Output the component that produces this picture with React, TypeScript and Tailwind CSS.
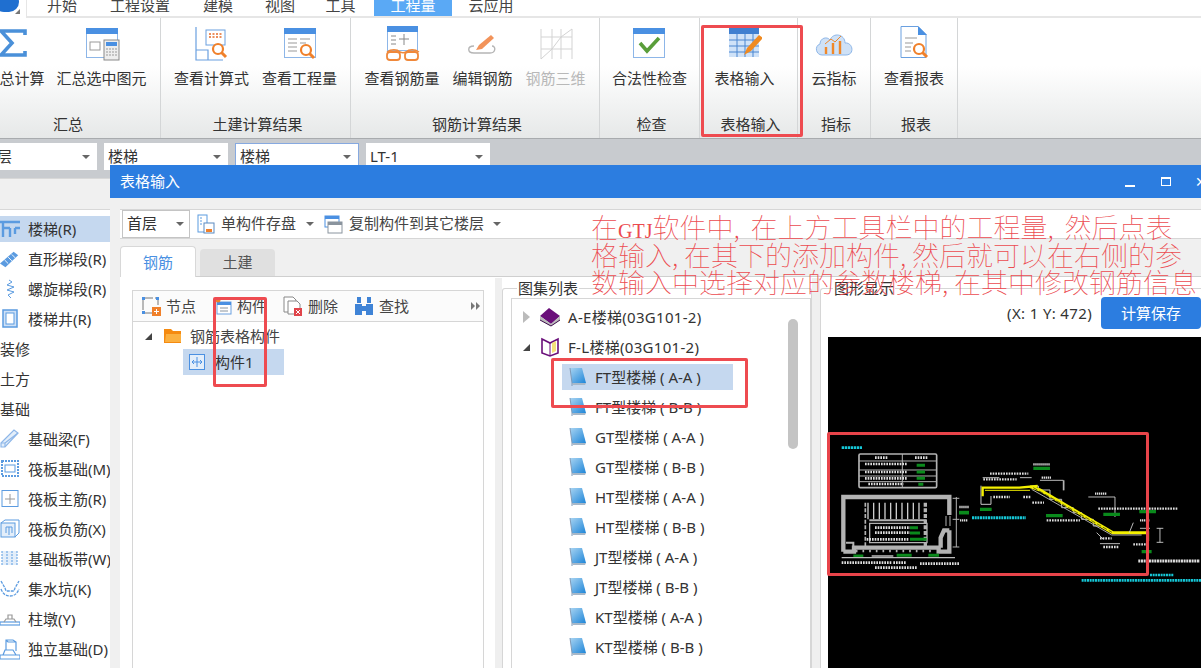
import type { ReactNode } from "react";

const tabs = [
  { label: "开始", w: "w-[70px]" },
  { label: "工程设置", w: "w-[86px]" },
  { label: "建模", w: "w-[70px]" },
  { label: "视图", w: "w-[54px]" },
  { label: "工具", w: "w-[67px]" },
  { label: "工程量", w: "w-[78px]", active: true },
  { label: "云应用", w: "w-[78px]" },
];

const sidebarRows: { label: string; icon?: string; selected?: boolean }[] = [
  { label: "楼梯(R)", icon: "stair", selected: true },
  { label: "直形梯段(R)", icon: "flight" },
  { label: "螺旋梯段(R)", icon: "spiral" },
  { label: "楼梯井(R)", icon: "well" },
  { label: "装修" },
  { label: "土方" },
  { label: "基础" },
  { label: "基础梁(F)", icon: "beam" },
  { label: "筏板基础(M)", icon: "raft" },
  { label: "筏板主筋(R)", icon: "main" },
  { label: "筏板负筋(X)", icon: "neg" },
  { label: "基础板带(W)", icon: "strip" },
  { label: "集水坑(K)", icon: "pit" },
  { label: "柱墩(Y)", icon: "pier" },
  { label: "独立基础(D)", icon: "footing" },
];

const stairList = [
  "FT型楼梯 ( A-A )",
  "FT型楼梯 ( B-B )",
  "GT型楼梯 ( A-A )",
  "GT型楼梯 ( B-B )",
  "HT型楼梯 ( A-A )",
  "HT型楼梯 ( B-B )",
  "JT型楼梯 ( A-A )",
  "JT型楼梯 ( B-B )",
  "KT型楼梯 ( A-A )",
  "KT型楼梯 ( B-B )",
];

function Win({ children }: { children?: ReactNode }) {
  return (
    <svg width="36" height="36" viewBox="0 0 36 36" fill="none">
      <rect x="2.5" y="3.5" width="31" height="29" fill="#fff" stroke="#8db6e8" />
      <rect x="2" y="3" width="32" height="6" fill="#4a90e2" />
      {children}
    </svg>
  );
}

function Magnifier({ x, y }: { x: number; y: number }) {
  return (
    <g stroke="#f0802a" strokeWidth="2.2" fill="#fff">
      <circle cx={x} cy={y} r="5" />
      <line x1={x + 3.5} y1={y + 3.5} x2={x + 8} y2={y + 8} strokeWidth="3" />
    </g>
  );
}

function RibbonIcon({ name }: { name: string }) {
  switch (name) {
    case "sigma":
      return (
        <svg width="36" height="36" viewBox="0 0 36 36" fill="none">
          <path d="M29 10V6H5l11 12L5 30h24v-4" stroke="#4a90d9" strokeWidth="3.6" />
        </svg>
      );
    case "sum":
      return (
        <Win>
          <rect x="6" y="17" width="10" height="8" stroke="#9a9a9a" />
          <rect x="20" y="15" width="15" height="20" fill="#eee" stroke="#8a8a8a" />
          <rect x="22" y="17" width="11" height="4" fill="#4a90e2" />
          <path d="M22 24h11M22 27h11M22 30h11" stroke="#999" strokeDasharray="2 1" />
        </Win>
      );
    case "formula":
      return (
        <svg width="36" height="36" viewBox="0 0 36 36" fill="none">
          <path d="M3 2v33h27M3 25h12v10" stroke="#6aa0e0" strokeWidth="1.2" />
          <rect x="13" y="5" width="19" height="15" fill="#fff" stroke="#6aa0e0" />
          <path d="M16 9h13M16 12h13" stroke="#e56a2a" strokeWidth="1.6" strokeDasharray="2 1.5" />
          <Magnifier x={25} y={24} />
        </svg>
      );
    case "quantity":
      return (
        <Win>
          <path d="M6 14h9M6 18h9M6 22h9M6 26h9M18 14h10M18 18h6" stroke="#999" />
          <Magnifier x={24} y={25} />
        </Win>
      );
    case "rebar":
      return (
        <svg width="36" height="36" viewBox="0 0 36 36" fill="none">
          <rect x="3.5" y="1.5" width="30" height="24" fill="#fff" stroke="#8db6e8" />
          <rect x="3" y="1" width="31" height="6" fill="#4a90e2" />
          <path d="M7 11h5M7 15h5M7 19h5M20 9v11M15 14h10" stroke="#888" />
          <path d="M3 27c4-3 10-3 13 0 2 1 4 1 6 0 3-3 9-3 13 0" stroke="#f0883a" strokeWidth="1.4" />
          <rect x="3" y="27" width="13" height="8" rx="3" fill="#fff" stroke="#f0883a" strokeWidth="1.8" />
          <rect x="21" y="27" width="13" height="8" rx="3" fill="#fff" stroke="#f0883a" strokeWidth="1.8" />
        </svg>
      );
    case "edit":
      return (
        <svg width="36" height="36" viewBox="0 0 36 36" fill="none">
          <path d="M10 21c-7 0-7 7 0 7h16c6 0 6-7 2-7" stroke="#b5b5b5" strokeWidth="1.4" />
          <path d="M12 25l3-5 12-10 3 3-12 11z" fill="#f2935a" />
        </svg>
      );
    case "grid3d":
      return (
        <svg width="36" height="36" viewBox="0 0 36 36" fill="none" stroke="#d3d3d3">
          <path d="M3 4v30M14 4v30M23 4v30M34 4v30M3 12h31M3 24h31M3 34l11-10 9-12 11-8" />
        </svg>
      );
    case "check":
      return (
        <Win>
          <path d="M9 18l7 8 12-13" stroke="#5a9e3a" strokeWidth="3.6" />
        </Win>
      );
    case "table":
      return (
        <svg width="36" height="36" viewBox="0 0 36 36" fill="none">
          <rect x="3" y="3" width="30" height="29" fill="#cfe2f8" />
          <rect x="3" y="3" width="30" height="6" fill="#3f7fd0" />
          <path d="M11 9v23M19 9v23M27 9v23M3 15h30M3 21h30M3 27h30" stroke="#4a86d0" />
          <path d="M18 30l3-7 12-13 4 3-12 13z" fill="#f08a20" />
        </svg>
      );
    case "cloud":
      return (
        <svg width="42" height="36" viewBox="0 0 42 36" fill="none">
          <path d="M9 30C3 30 1 21 7 19c0-6 7-8 10-4 3-8 15-6 15 3 8-1 10 12 1 12z" fill="#cfe1f6" stroke="#8db6e8" />
          <path d="M13 29v-7M20 29V18M27 29V16" stroke="#f0882a" strokeWidth="2.4" />
          <path d="M12 19l6-5 4 3 6-6" stroke="#f0882a" />
        </svg>
      );
    default:
      return (
        <svg width="36" height="36" viewBox="0 0 36 36" fill="none">
          <path d="M5 1.5h17l8 8v23H5z" fill="#fff" stroke="#6aa0e0" />
          <path d="M22 1l9 9h-9z" fill="#4a90e2" />
          <path d="M9 13h12M9 18h8M9 22h6M9 26h6" stroke="#999" />
          <Magnifier x={23} y={24} />
        </svg>
      );
  }
}

function RibbonItem({ icon, label, muted }: { icon: string; label: string; muted?: boolean }) {
  return (
    <div className="flex flex-col items-center whitespace-nowrap">
      <div className="flex h-[36px] items-center justify-center">
        <RibbonIcon name={icon} />
      </div>
      <span className={`mt-[7px] leading-[20px] ${muted ? "text-[#b8b8b8]" : "text-[#333]"}`}>{label}</span>
    </div>
  );
}

function RibbonGroup({ className, label, labelClass = "pl-[4px]", children }: { className: string; label: string; labelClass?: string; children: ReactNode }) {
  return (
    <div className={`flex h-full shrink-0 flex-col border-r border-[#d4d6d7] pt-[7px] pb-[4px] ${className}`}>
      <div className="flex flex-1 items-start justify-center">{children}</div>
      <div className={`text-center leading-[20px] text-[#333] ${labelClass}`}>{label}</div>
    </div>
  );
}

function Caret() {
  return <span className="block h-0 w-0 shrink-0 border-x-[4px] border-t-[4px] border-x-transparent border-t-[#666]" />;
}

function Combo({ w, label, focus }: { w: string; label: string; focus?: boolean }) {
  return (
    <div className={`flex h-[27px] items-center justify-between bg-white pl-[4px] pr-[7px] ${w} ${focus ? "border border-[#86a9e0]" : ""}`}>
      <span className="text-[#333]">{label}</span>
      <Caret />
    </div>
  );
}

function SideIcon({ name }: { name: string }) {
  const s = "#5b9be0";
  switch (name) {
    case "stair":
      return (
        <svg width="20" height="20" viewBox="0 0 20 20" fill="none" stroke={s} strokeWidth="2.4">
          <path d="M0 3h20M3 3v15M3 9h7M10 9v9M15 9h5M15 9v6" />
        </svg>
      );
    case "flight":
      return (
        <svg width="22" height="20" viewBox="0 0 22 20" fill="none">
          <path d="M0 15L15 2l5 4L6 19z" fill={s} />
          <path d="M5 11l4 4M9 8l4 4M13 5l4 4" stroke="#fff" />
        </svg>
      );
    case "spiral":
      return (
        <svg width="20" height="20" viewBox="0 0 20 20" fill="none" stroke={s}>
          <path d="M9 1l3 2-5 3 7 2-7 3 7 2-6 3 3 3" />
        </svg>
      );
    case "well":
      return (
        <svg width="20" height="20" viewBox="0 0 20 20" fill="none" stroke={s}>
          <rect x="3" y="1" width="14" height="17" fill="#cfe1f6" strokeWidth="1.5" />
          <rect x="6" y="4" width="8" height="11" fill="#fff" />
        </svg>
      );
    case "beam":
      return (
        <svg width="20" height="20" viewBox="0 0 20 20" fill="none" stroke="#8db6e8" strokeWidth="1.2">
          <path d="M1 14L14 1l4 3L5 18H1z" fill="#e3eefa" />
          <path d="M1 14h4v4M5 14L18 4" />
        </svg>
      );
    case "raft":
      return (
        <svg width="20" height="20" viewBox="0 0 20 20" fill="none" stroke={s}>
          <rect x="2" y="2" width="16" height="15" strokeWidth="2" strokeDasharray="2 1" />
          <rect x="5" y="6" width="10" height="7" />
        </svg>
      );
    case "main":
      return (
        <svg width="20" height="20" viewBox="0 0 20 20" fill="none" stroke={s}>
          <rect x="2" y="1.5" width="16" height="16" />
          <path d="M10 5v10M5 10h10" stroke="#999" />
        </svg>
      );
    case "neg":
      return (
        <svg width="20" height="20" viewBox="0 0 20 20" fill="none" stroke={s}>
          <rect x="1" y="4" width="14" height="14" fill="#e3eefa" />
          <path d="M1 4l4-3h14v13l-4 4M6 14V8h6v6M9 8v8" />
        </svg>
      );
    case "strip":
      return (
        <svg width="20" height="20" viewBox="0 0 20 20" fill="none" stroke={s}>
          <rect x="2" y="2" width="15" height="14" fill="#e3eefa" stroke="none" />
          <path d="M7 2v14M12 2v14M2 2v14M17 2v14" strokeDasharray="2 1" />
        </svg>
      );
    case "pit":
      return (
        <svg width="20" height="20" viewBox="0 0 20 20" fill="none" stroke={s} strokeWidth="1.3">
          <path d="M1 2l4 7 1 3h8l1-3 4-7M1 10c2 5 5 7 9 7s7-2 9-7" strokeDasharray="3 1" />
        </svg>
      );
    case "pier":
      return (
        <svg width="20" height="20" viewBox="0 0 20 20" fill="none" stroke={s} strokeWidth="1.2">
          <rect x="0" y="13" width="20" height="3" />
          <path d="M4 13l2-3h8l2 3M8 10V6h4v4" stroke="#999" />
        </svg>
      );
    default:
      return (
        <svg width="20" height="22" viewBox="0 0 20 22" fill="none" stroke={s} strokeWidth="1.2">
          <path d="M0 17h20v4H0zM3 17l2-5h8l3 5M6 12V2h7l3 2v9M6 2l2 2h8" />
        </svg>
      );
  }
}

function SidebarRow({ label, icon, selected }: { label: string; icon?: string; selected?: boolean }) {
  return (
    <div className="flex h-[30px] items-center">
      <div className={`flex h-[26px] w-full items-center overflow-hidden whitespace-nowrap ${selected ? "bg-[#c5d8ef]" : ""}`}>
        {icon ? (
          <>
            <span className="flex w-[20px] shrink-0 items-center justify-center">
              <SideIcon name={icon} />
            </span>
            <span className="ml-[8px]">{label}</span>
          </>
        ) : (
          <span>{label}</span>
        )}
      </div>
    </div>
  );
}

function PanelTool({ className, label, children }: { className: string; label: string; children: ReactNode }) {
  return (
    <div className={`flex items-center ${className}`}>
      {children}
      <span className="ml-[5px] text-[#444]">{label}</span>
    </div>
  );
}

function BlueBook({ id }: { id: string }) {
  return (
    <svg width="18" height="20" viewBox="0 0 18 20" fill="none">
      <defs>
        <linearGradient id={id} x1="0" y1="0" x2="1" y2="1">
          <stop offset="0" stopColor="#a8d4f2" />
          <stop offset="1" stopColor="#1f86d8" />
        </linearGradient>
      </defs>
      <path d="M1 1h12l4 15H3z" fill={`url(#${id})`} />
      <path d="M3 16h14l-1 2H4z" fill="#a8b8c8" />
      <path d="M1 1l2 15v3" stroke="#7f9ab8" />
    </svg>
  );
}

function Comma({ wide }: { wide?: boolean }) {
  return <span className={`inline-block ${wide ? "w-[17px]" : "w-[12px]"}`}>,</span>;
}

function CadDrawing() {
  const g = "#b3b3b3";
  return (
    <svg width="373" height="332" viewBox="0 0 373 332" className="block" fill="none">
      <g transform="translate(-8 84) scale(0.3333)">
        <path d="M65 80h62" stroke="#16c8d8" strokeWidth="8" strokeDasharray="7 2" />
        {/* rebar table */}
        <rect x="117" y="99" width="233" height="101" rx="4" stroke={g} strokeWidth="5" />
        <path d="M117 120h233M117 147h233M117 165h233M117 182h233M247 99v101" stroke={g} strokeWidth="3" />
        <path d="M135 129h125M135 153h125M135 172h125M145 189h105M165 110h40M285 110h40" stroke="#ddd" strokeWidth="8" strokeDasharray="5 3" />
        <path d="M290 133h25M290 153h25M290 172h25M295 190h15" stroke="#0a8a1c" strokeWidth="9" />
        {/* plan */}
        <path d="M70 392V228H388V282M388 328V392H356V380H102V392H70M388 328H372L362 350V380" stroke={g} strokeWidth="13" />
        <path d="M78 365h22v15" stroke={g} strokeWidth="6" />
        <path d="M144 245v50M161 245v50M178 245v50M195 245v50M212 245v50M229 245v50M246 245v50M263 245v50M280 245v50M297 245v50" stroke="#ccc" strokeWidth="4" />
        <path d="M136 245v130" stroke={g} strokeWidth="5" strokeDasharray="12 5" />
        <path d="M316 245v135" stroke={g} strokeWidth="10" strokeDasharray="12 5" />
        <path d="M148 298h172" stroke={g} strokeWidth="6" />
        <path d="M149 307h172v58H149z" stroke={g} strokeWidth="4" />
        <path d="M110 386v8M130 386v8M150 386v8M170 386v8M190 386v8M210 386v8M230 386v8M250 386v8M270 386v8M290 386v8M310 386v8M330 386v8" stroke={g} strokeWidth="5" />
        <path d="M165 320h105M165 335h105M140 355h125" stroke="#ddd" strokeWidth="8" strokeDasharray="5 3" />
        <path d="M270 320h24M270 336h30M270 355h50" stroke="#0a8a1c" strokeWidth="9" />
        <path d="M409 228v150M398 232h20M398 295h20M398 378h20M378 285v30M390 285v30" stroke={g} strokeWidth="3" />
        <path d="M417 275h30" stroke="#0a8a1c" strokeWidth="11" />
        <path d="M418 258h28M420 298h24" stroke="#ddd" strokeWidth="7" strokeDasharray="4 2" />
        <path d="M100 405h30M230 403h45M325 403h32" stroke="#0a8a1c" strokeWidth="9" />
        <path d="M155 405h65M65 410h340" stroke="#bbb" strokeWidth="4" />
        <path d="M65 425h150M165 440h125M300 428h120M220 425h40" stroke="#ddd" strokeWidth="8" strokeDasharray="5 3" />
        {/* section of the stair */}
        <path d="M483 194v56h30v-25M635 195h20v12h35v28h35v25h35v15h25v20h35v20h25" stroke="#c8c8c8" strokeWidth="3" />
        <path d="M488 170h50M600 170h35M660 178h70v30M732 178v30M805 228h80v60" stroke="#ddd" strokeWidth="2.5" />
        <path d="M510 158h115M490 175h100M520 228h50M610 228h22M637 245h35M680 298h100M835 263h240M840 352h35M850 378h45M940 370h45" stroke="#ddd" strokeWidth="7" strokeDasharray="5 3" />
        <path d="M640 130h50M665 170h30M825 218h35M960 298h30" stroke="#ddd" strokeWidth="7" strokeDasharray="4 2" />
        <path d="M640 142h50M480 265h35M678 284h50M850 280h50M958 272h50M965 392h30" stroke="#0a8a1c" strokeWidth="10" />
        <path d="M456 290h162" stroke="#16c8d8" strokeWidth="9" strokeDasharray="6 2" />
        <path d="M488 226V200h110l55-5" stroke="#f4f000" strokeWidth="7" />
        <path d="M495 208h135" stroke="#f4f000" strokeWidth="3" />
        <path d="M630 197l30 10 218 128h105v25" stroke="#f4f000" strokeWidth="9" />
        <path d="M635 205l240 137h90" stroke="#aaa" strokeWidth="3" />
        <path d="M640 200l236 134" stroke="#222" strokeWidth="2" strokeDasharray="14 6" />
        <path d="M940 305l-12 30M960 322h30M1020 322v42M1010 322h20M1010 364h20M830 335l20 20M840 368h60" stroke="#ddd" strokeWidth="2.5" />
        <path d="M955 420h185" stroke="#ddd" strokeWidth="9" strokeDasharray="6 2" />
        <path d="M990 462h70M785 478h360" stroke="#16c8d8" strokeWidth="8" strokeDasharray="6 2" />
        <path d="M760 462h100" stroke="#16a8c8" strokeWidth="4" strokeDasharray="6 2" />
      </g>
    </svg>
  );
}

export default function App() {
  return (
    <div className="relative h-[668px] w-[1201px] overflow-hidden bg-white font-['Noto_Sans','Noto_Sans_CJK_SC',sans-serif] text-[15px] text-[#333]">
      {/* tab strip, cut at the top of the shot */}
      <div className="flex h-[18px] overflow-hidden bg-white">
        <div className="relative w-[26px] shrink-0">
          <div className="absolute -top-[8px] left-[-6px] h-[20px] w-[25px] rounded-full bg-[#1f6fd0]" />
          <div className="absolute left-[15px] top-[9px] h-0 w-0 border-b-[5px] border-l-[5px] border-b-[#777] border-l-transparent" />
        </div>
        <div className="flex h-[18px] flex-1 border-b-2 border-l border-[#e6e6e6]">
          {tabs.map((t) => (
            <div
              key={t.label}
              className={`flex h-[16px] shrink-0 items-center justify-center leading-[10px] ${t.w} ${t.active ? "bg-[#5aa9f5] text-white" : "text-[#444]"}`}
            >
              <span className="-mt-[6px]">{t.label}</span>
            </div>
          ))}
        </div>
      </div>

      {/* ribbon */}
      <div className="flex h-[120px] bg-gradient-to-b from-white from-40% to-[#e6e8e8]">
        <RibbonGroup className="w-[161px]" label="汇总" labelClass="pr-[24px]">
          <div className="-ml-[29px] flex gap-[12px]">
            <RibbonItem icon="sigma" label="汇总计算" />
            <RibbonItem icon="sum" label="汇总选中图元" />
          </div>
        </RibbonGroup>
        <RibbonGroup className="w-[190px]" label="土建计算结果">
          <div className="flex gap-[13px]">
            <RibbonItem icon="formula" label="查看计算式" />
            <RibbonItem icon="quantity" label="查看工程量" />
          </div>
        </RibbonGroup>
        <RibbonGroup className="w-[249px]" label="钢筋计算结果">
          <div className="flex gap-[13px]">
            <RibbonItem icon="rebar" label="查看钢筋量" />
            <RibbonItem icon="edit" label="编辑钢筋" />
            <RibbonItem icon="grid3d" label="钢筋三维" muted />
          </div>
        </RibbonGroup>
        <RibbonGroup className="w-[100px]" label="检查">
          <RibbonItem icon="check" label="合法性检查" />
        </RibbonGroup>
        <RibbonGroup className="w-[98px]" label="表格输入">
          <div className="pr-[8px]">
            <RibbonItem icon="table" label="表格输入" />
          </div>
        </RibbonGroup>
        <RibbonGroup className="w-[73px]" label="指标">
          <RibbonItem icon="cloud" label="云指标" />
        </RibbonGroup>
        <RibbonGroup className="w-[87px]" label="报表">
          <RibbonItem icon="report" label="查看报表" />
        </RibbonGroup>
        <div className="flex-1" />
      </div>

      {/* selector row */}
      <div className="flex h-[40px] items-start gap-[7px] border-t border-[#a8abae] bg-[#c8cbcf] pt-[4px]">
        <div className="-ml-[7px]">
          <Combo w="w-[104px]" label="层" />
        </div>
        <Combo w="w-[124px]" label="楼梯" />
        <Combo w="w-[124px]" label="楼梯" focus />
        <Combo w="w-[124px]" label="LT-1" />
      </div>

      {/* component sidebar */}
      <div className="h-[490px] w-[111px] border-r border-[#b9bcc0]">
        <div className="h-[32px] border-y border-[#d8d8d8] bg-[#f0f0f0]" />
        <div className="pt-[4px]">
          {sidebarRows.map((r) => (
            <SidebarRow key={r.label} {...r} />
          ))}
        </div>
      </div>

      {/* dialog window */}
      <div className="absolute bottom-0 left-[110px] right-0 top-[165px] flex flex-col overflow-hidden bg-[#f0f0f0]">
        <div className="flex h-[33px] shrink-0 items-center bg-[#2c7de0] pl-[10px] text-white">
          <span>表格输入</span>
          <span className="ml-auto flex items-center">
            <span className="mt-[8px] h-[2px] w-[10px] bg-white" />
            <span className="ml-[26px] h-[9px] w-[10px] border border-t-2 border-white" />
            <span className="ml-[24px] w-[6px] overflow-hidden text-[14px] leading-none">✕</span>
          </span>
        </div>

        <div className="ml-[10px] mt-[11px] flex h-[30px] shrink-0 items-center border-y border-[#d6d6d6] bg-white pb-[1px]">
          <div className="ml-[2px] flex h-[28px] w-[68px] items-center justify-between border border-[#c4c4c4] pl-[4px] pr-[5px]">
            <span>首层</span>
            <Caret />
          </div>
          <svg className="ml-[7px]" width="18" height="20" viewBox="0 0 18 20" fill="none">
            <rect x="1" y="1" width="9" height="17" fill="#fff" stroke="#5b9be0" />
            <path d="M3 4h2M3 7h2M3 10h2" stroke="#5b9be0" />
            <rect x="7" y="9" width="10" height="10" fill="#fff" stroke="#5b8ac0" />
            <rect x="9" y="15" width="6" height="3" fill="#f0802a" />
          </svg>
          <span className="ml-[6px] text-[#444]">单构件存盘</span>
          <span className="ml-[10px]"><Caret /></span>
          <svg className="ml-[10px]" width="19" height="20" viewBox="0 0 19 20" fill="none">
            <rect x="1" y="2" width="14" height="11" fill="#fff" stroke="#4a90e2" />
            <rect x="1" y="2" width="14" height="3" fill="#4a90e2" />
            <rect x="4" y="8" width="14" height="11" fill="#fff" stroke="#8a949e" />
            <rect x="4" y="8" width="14" height="3" fill="#8a949e" />
          </svg>
          <span className="ml-[6px] text-[#444]">复制构件到其它楼层</span>
          <span className="ml-[9px]"><Caret /></span>
        </div>

        <div className="ml-[10px] mt-[7px] flex h-[31px] shrink-0 items-end border-b border-[#cfcfcf]">
          <div className="-mb-px flex h-[31px] w-[76px] items-center justify-center rounded-t-[4px] border border-b-0 border-[#d8d8d8] bg-white text-[#4a90e2]">
            钢筋
          </div>
          <div className="ml-[4px] flex h-[27px] w-[75px] items-center justify-center rounded-t-[4px] bg-[#e0e0e0] text-[#555]">
            土建
          </div>
        </div>

        <div className="ml-[10px] flex min-h-0 flex-1 bg-white">
          {/* component tree */}
          <div className="ml-[12px] mt-[13px] flex w-[352px] shrink-0 flex-col border-x border-t border-[#d6d6d6]">
            <div className="relative flex h-[31px] shrink-0 items-center border-b border-[#d6d6d6] bg-[#fbfbfb]">
              <PanelTool className="ml-[8px]" label="节点">
                <svg width="20" height="20" viewBox="0 0 20 20" fill="none">
                  <rect x="2" y="2" width="15" height="15" stroke="#777" strokeDasharray="10 2" />
                  <path d="M1 1h3v3H1zM15 1h3v3h-3zM1 15h3v3H1z" fill="#4a90e2" />
                  <rect x="11" y="11" width="9" height="9" fill="#f0802a" />
                  <path d="M15.500 13v5M13 15.500h5" stroke="#fff" />
                </svg>
              </PanelTool>
              <PanelTool className="ml-[20px]" label="构件">
                <svg width="16" height="18" viewBox="0 0 16 18" fill="none">
                  <rect x="1" y="5" width="14" height="12" fill="#fff" stroke="#6aa0e0" />
                  <rect x="1" y="5" width="14" height="3" fill="#4a90e2" />
                  <path d="M4 11h8M4 14h8" stroke="#8a949e" />
                  <circle cx="2" cy="3" r="2.500" fill="#f0802a" />
                </svg>
              </PanelTool>
              <PanelTool className="ml-[16px]" label="删除">
                <svg width="20" height="20" viewBox="0 0 20 20" fill="none">
                  <path d="M1 1h9l3 3v12H1z" fill="#fff" stroke="#888" />
                  <path d="M5 5h9l3 3v10H5z" fill="#fff" stroke="#888" />
                  <rect x="11" y="12" width="8" height="8" fill="#e0444a" />
                  <path d="M13 14l4 4M17 14l-4 4" stroke="#fff" />
                </svg>
              </PanelTool>
              <PanelTool className="ml-[16px]" label="查找">
                <svg width="20" height="20" viewBox="0 0 20 20">
                  <path d="M1 8h7v11H1zM12 8h7v11h-7zM3 1h4v6H3zM13 1h4v6h-4zM8 10h4v5H8z" fill="#3f83d6" />
                </svg>
              </PanelTool>
              <span className="absolute right-[3px] flex gap-[1px]">
                <span className="block h-0 w-0 border-y-[4px] border-l-[4px] border-y-transparent border-l-[#777]" />
                <span className="block h-0 w-0 border-y-[4px] border-l-[4px] border-y-transparent border-l-[#777]" />
              </span>
            </div>
            <div className="flex-1 bg-white pt-[1px]">
              <div className="flex h-[26px] items-center">
                <span className="ml-[12px] h-0 w-0 border-b-[7px] border-l-[7px] border-b-[#444] border-l-transparent" />
                <svg className="ml-[12px]" width="18" height="16" viewBox="0 0 18 16">
                  <path d="M0 1h7l2 2h8v12H0z" fill="#f58a10" />
                  <path d="M2 6h15v8H1z" fill="#fbb040" />
                </svg>
                <span className="ml-[8px] text-[#444]">钢筋表格构件</span>
              </div>
              <div className="ml-[50px] flex h-[26px] w-[101px] items-center bg-[#c5d8ef]">
                <svg className="ml-[6px]" width="16" height="16" viewBox="0 0 16 16" fill="none" stroke="#4a90e2">
                  <rect x="0.500" y="0.500" width="15" height="15" fill="#e3eefa" />
                  <path d="M8 3v10M3 8h10M3 8l2-2M3 8l2 2M13 8l-2-2M13 8l-2 2" />
                </svg>
                <span className="ml-[10px]">构件1</span>
              </div>
            </div>
          </div>

          {/* splitter */}
          <div className="ml-[11px] mt-[1px] w-[7px] shrink-0 bg-[#efefef]" />

          {/* atlas list */}
          <fieldset className="mt-[1px] w-[310px] shrink-0 rounded-t-[3px] border-l border-r border-t border-[#d6d6d6]">
            <legend className="ml-[14px] px-[1px] leading-[20px]">图集列表</legend>
            <div className="relative ml-[8px] h-full overflow-hidden border-l border-r border-t border-[#d6d6d6] pt-[3px]">
              <div className="flex h-[30px] items-center">
                <span className="ml-[11px] h-0 w-0 border-y-[6px] border-l-[7px] border-y-transparent border-l-[#bbb]" />
                <svg className="ml-[9px]" width="22" height="20" viewBox="0 0 22 20">
                  <path d="M1 9l9-8 11 8-9 8z" fill="#6a0f7a" />
                  <path d="M1 9v4l11 6 9-6V9l-9 8z" fill="#bbb" />
                  <path d="M1 13l11 6 9-6" fill="none" stroke="#3a0a4a" />
                </svg>
                <span className="ml-[7px] tracking-[0.3px]">A-E楼梯(03G101-2)</span>
              </div>
              <div className="flex h-[30px] items-center">
                <span className="ml-[11px] h-0 w-0 border-b-[7px] border-l-[7px] border-b-[#444] border-l-transparent" />
                <svg className="ml-[9px]" width="22" height="22" viewBox="0 0 22 22" fill="none">
                  <path d="M3 3l8 4 8-4v14l-8 3-8-3z" fill="#fff" stroke="#6a0f7a" strokeWidth="1.600" />
                  <path d="M13 7l4-2v10l-4 2z" fill="#f4e27a" />
                  <path d="M11 7v13" stroke="#6a0f7a" />
                </svg>
                <span className="ml-[7px] tracking-[0.3px]">F-L楼梯(03G101-2)</span>
              </div>
              {stairList.map((s, i) => (
                <div key={s} className="flex h-[30px] items-center">
                  <div className={`ml-[50px] flex h-[26px] w-[171px] items-center pl-[7px] ${i === 0 ? "bg-[#c5d8ef]" : ""}`}>
                    <BlueBook id={`book-${i}`} />
                    <span className="ml-[8px] whitespace-nowrap">{s}</span>
                  </div>
                </div>
              ))}
              <div className="absolute left-[276px] top-[20px] h-[130px] w-[10px] rounded-[5px] bg-[#c4c4c4]" />
            </div>
          </fieldset>

          {/* splitter */}
          <div className="mt-[1px] w-[8px] shrink-0 bg-[#efefef]" />

          {/* graphic preview */}
          <fieldset className="mt-[1px] min-w-0 flex-1 rounded-tl-[3px] border-l border-t border-[#d6d6d6]">
            <legend className="ml-[12px] px-[1px] leading-[20px]">图形显示</legend>
            <div className="-mt-[1px] flex h-[32px] items-center justify-end">
              <span className="mr-[9px] tracking-[0.35px]">(X: 1 Y: 472)</span>
              <div className="flex h-[32px] w-[100px] items-center justify-center rounded-[4px] bg-[#2c7de0] text-white">计算保存</div>
            </div>
            <div className="ml-[7px] mt-[8px] h-[332px] overflow-hidden bg-black">
              <CadDrawing />
            </div>
          </fieldset>
        </div>
      </div>

      {/* red annotation laid over the screenshot */}
      <div className="absolute left-[591px] top-[213px] w-[610px] whitespace-nowrap font-['Noto_Sans_CJK_SC',serif] text-[27px] font-thin leading-[27px] text-[#ec4a4f]">
        <div className="h-[27.5px]">
          在<span className="font-['Liberation_Serif',serif] text-[20px] leading-none">GTJ</span>软件中<Comma wide />在上方工具栏中的工程量<Comma wide />然后点表
        </div>
        <div className="h-[27.5px]">
          格输入<Comma />在其下的添加构件<Comma />然后就可以在右侧的参
        </div>
        <div className="h-[27.5px]">
          数输入中选择对应的参数楼梯<Comma />在其中修改钢筋信息
        </div>
      </div>

      {/* red highlight boxes */}
      <div className="absolute left-[701px] top-[25px] h-[112px] w-[102px] rounded-[2px] border-[3px] border-[#ee4b50]" />
      <div className="absolute left-[213px] top-[297px] h-[90px] w-[54px] rounded-[2px] border-[3px] border-[#ee4b50]" />
      <div className="absolute left-[551px] top-[358px] h-[50px] w-[197px] rounded-[2px] border-[3px] border-[#ee4b50]" />
      <div className="absolute left-[827px] top-[432px] h-[144px] w-[322px] rounded-[2px] border-[3px] border-[#e8444a]" />
    </div>
  );
}
